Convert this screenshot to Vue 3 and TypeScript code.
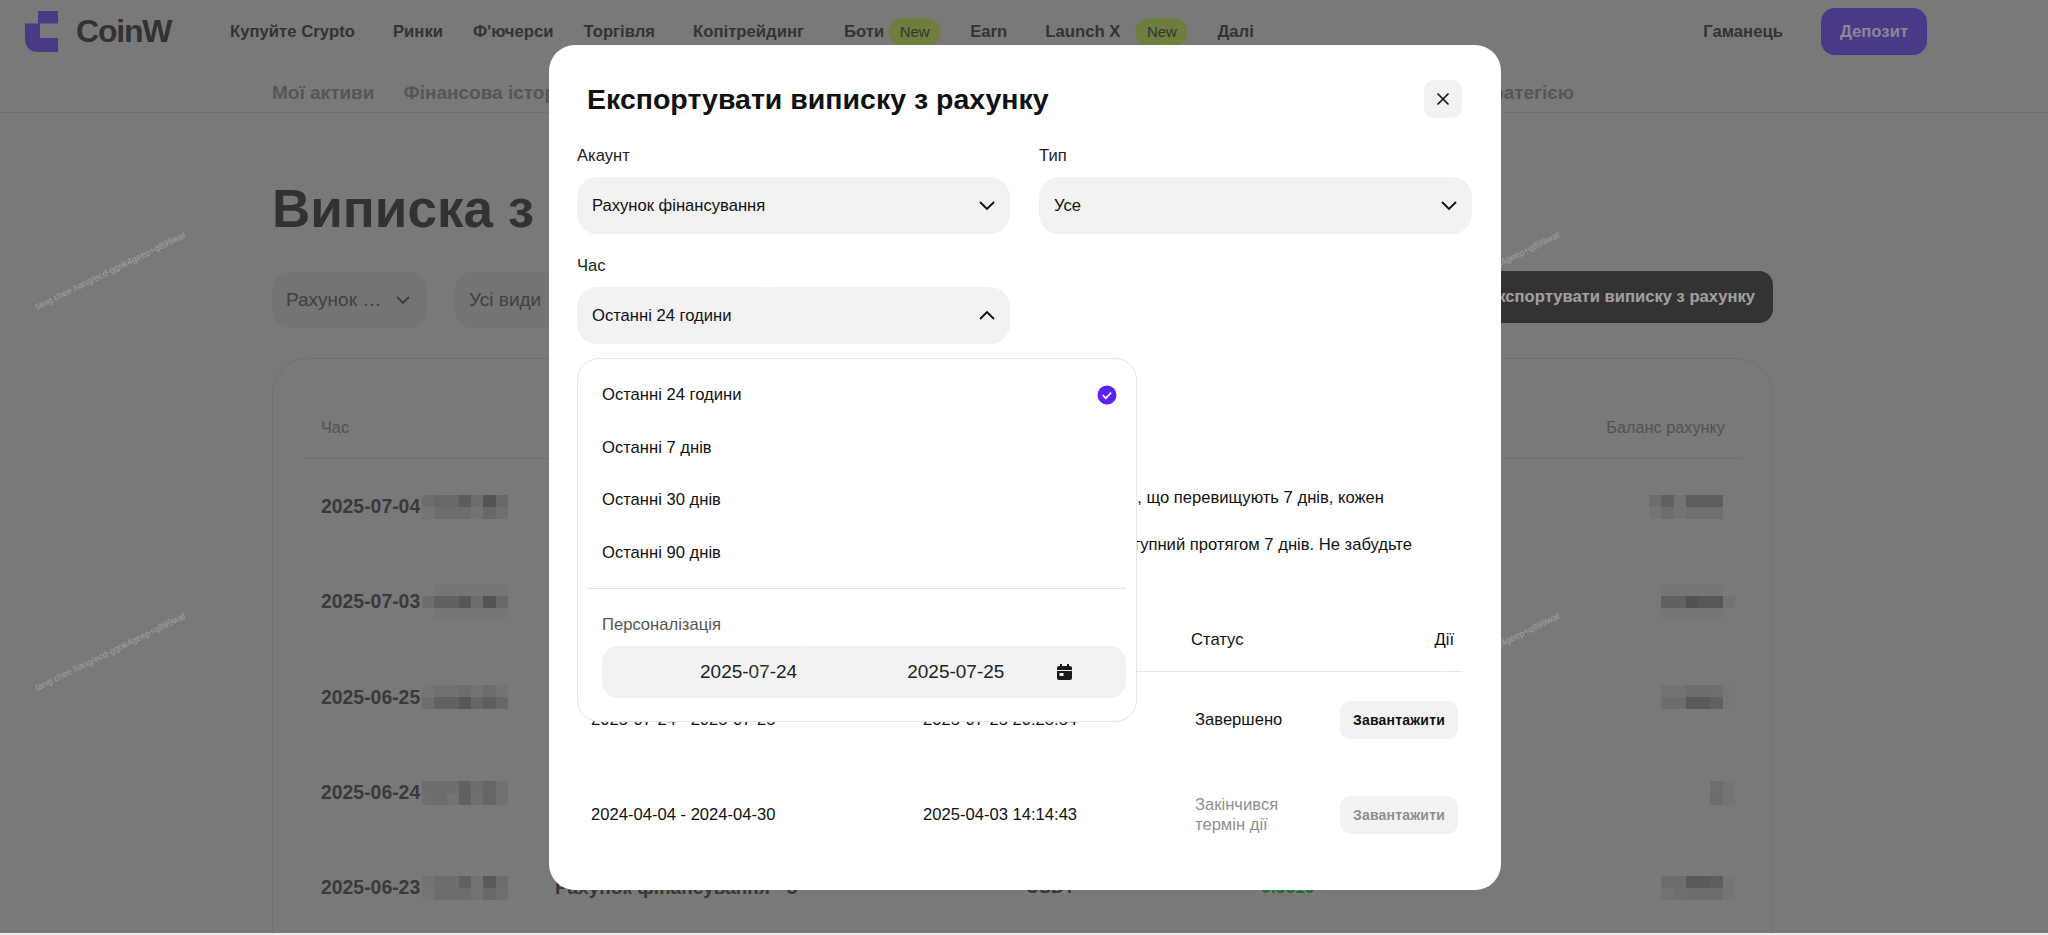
<script setup lang="ts">
// Сторінка виписки з відкритим модальним вікном експорту
type PageRow = { date: string; left: number[][]; right: number[][] }

// затемнені «мозаїки» на місці прихованих даних
const pageRows: PageRow[] = [
  {
    date: '2025-07-04',
    left: [[.1, .14, .14, .24, .1, .3, .14], [.03, .1, .1, .1, .05, .14, .08]],
    right: [[.1, .2, .05, .22, .22, .22, 0], [.04, .1, .05, .08, .08, .08, 0]],
  },
  {
    date: '2025-07-03',
    left: [[0, .02, .02, .02, .02, .02, .02], [.1, .2, .2, .28, .1, .3, .14], [0, .02, .02, .02, .02, .02, .02]],
    right: [[0, .02, .02, .02, .02, .02, 0], [0, .2, .2, .32, .28, .28, .05], [0, .02, .02, .02, .02, .02, 0]],
  },
  {
    date: '2025-06-25',
    left: [[.03, .06, .06, .1, .05, .1, .04], [.1, .2, .2, .28, .16, .22, .14]],
    right: [[0, .05, .05, .1, .1, .08, .01], [0, .1, .1, .25, .25, .2, .01]],
  },
  {
    date: '2025-06-24',
    left: [[.1, .1, .1, .2, .1, .16, .06], [.08, .1, .05, .2, .08, .16, .06]],
    right: [[0, 0, 0, 0, 0, .08, .04], [0, 0, 0, 0, 0, .1, .04]],
  },
  {
    date: '2025-06-23',
    left: [[.05, .1, .1, .2, .05, .25, .1], [.03, .1, .1, .1, .05, .14, .08]],
    right: [[0, .1, .1, .25, .25, .22, .03], [0, .05, .08, .1, .1, .1, .03]],
  },
]

const periods = ['Останні 24 години', 'Останні 7 днів', 'Останні 30 днів', 'Останні 90 днів']

const watermarks = [
  { left: 36, top: 301 },
  { left: 723, top: 301 },
  { left: 1410, top: 301 },
  { left: 36, top: 682 },
  { left: 723, top: 682 },
  { left: 1410, top: 682 },
]

function tone(a: number) {
  return { background: `rgba(0, 0, 0, ${a})` }
}
</script>

<template>
  <div class="page">
    <div class="canvas">
      <header class="nav">
        <div class="logo">
          <svg width="33" height="41" viewBox="0 0 33 41">
            <path d="M13 0H33V12.500H15V27H33V41H14Q0 41 0 27V12.500H13Z" fill="#6b53c1" />
          </svg>
          <span class="logo-text">CoinW</span>
        </div>
        <a class="link">Купуйте Crypto</a>
        <a class="link tight">Ринки</a>
        <a class="link tight">Ф'ючерси</a>
        <a class="link">Торгівля</a>
        <a class="link roomy">Копітрейдинг</a>
        <a class="link before-new">Боти</a>
        <span class="new">New</span>
        <a class="link">Earn</a>
        <a class="link before-new wide">Launch X</a>
        <span class="new">New</span>
        <a class="link">Далі</a>
        <div class="nav-right">
          <a class="link wallet">Гаманець</a>
          <button class="deposit">Депозит</button>
        </div>
      </header>

      <nav class="tabs">
        <span class="tab">Мої активи</span>
        <span class="tab">Фінансова історія</span>
        <span class="tab tab-end">Поділитися стратегією</span>
      </nav>

      <main class="content">
        <h1 class="title">Виписка з рахунку</h1>
        <div class="filters">
          <div class="filter f1">
            <span>Рахунок …</span>
            <svg width="16" height="10" viewBox="0 0 16 10"><path d="M2 2l6 6 6-6" fill="none" stroke="#555" stroke-width="1.8" /></svg>
          </div>
          <div class="filter f2"><span>Усі види</span></div>
          <button class="export">Експортувати виписку з рахунку</button>
        </div>

        <section class="card">
          <div class="card-head">
            <span>Час</span>
            <span>Баланс рахунку</span>
          </div>
          <div v-for="r in pageRows" :key="r.date" class="page-row">
            <b class="date">{{ r.date }}</b>
            <div class="mosaic">
              <div v-for="(line, i) in r.left" :key="i" class="mosaic-line">
                <i v-for="(a, j) in line" :key="j" :style="tone(a)"></i>
              </div>
            </div>
            <b class="acc">Рахунок фінансування - 3</b>
            <b class="cur">USDT</b>
            <b class="amount">0.5610</b>
            <div class="mosaic small">
              <div v-for="(line, i) in r.right" :key="i" class="mosaic-line">
                <i v-for="(a, j) in line" :key="j" :style="tone(a)"></i>
              </div>
            </div>
          </div>
        </section>
      </main>

      <div class="mask"></div>
    </div>

    <div class="modal">
      <div class="modal-head">
        <h2>Експортувати виписку з рахунку</h2>
        <button class="close" aria-label="Закрити">
          <svg width="14" height="14" viewBox="0 0 14 14"><path d="M1.500 1.500l11 11M12.500 1.500l-11 11" stroke="#111" stroke-width="1.6" /></svg>
        </button>
      </div>

      <div class="fields">
        <label class="field">
          <span class="label">Акаунт</span>
          <div class="select">
            <span>Рахунок фінансування</span>
            <svg width="18" height="11" viewBox="0 0 18 11"><path d="M2 2l7 7 7-7" fill="none" stroke="#111" stroke-width="1.9" /></svg>
          </div>
        </label>
        <label class="field">
          <span class="label">Тип</span>
          <div class="select">
            <span>Усе</span>
            <svg width="18" height="11" viewBox="0 0 18 11"><path d="M2 2l7 7 7-7" fill="none" stroke="#111" stroke-width="1.9" /></svg>
          </div>
        </label>
        <label class="field">
          <span class="label">Час</span>
          <div class="select">
            <span>Останні 24 години</span>
            <svg width="18" height="11" viewBox="0 0 18 11"><path d="M2 9l7-7 7 7" fill="none" stroke="#111" stroke-width="1.9" /></svg>
          </div>
        </label>
      </div>

      <div class="notice">
        <p class="line-one">Для даних, що перевищують 7 днів, кожен</p>
        <p>файл буде доступний протягом 7 днів. Не забудьте</p>
      </div>

      <div class="table">
        <div class="t-head">
          <span class="c1">Час</span>
          <span class="c2">Створено</span>
          <span class="c3 status-head">Статус</span>
          <span class="c4">Дії</span>
        </div>
        <div class="t-row">
          <span class="c1">2025-07-24 - 2025-07-25</span>
          <span class="c2">2025-07-25 20:28:54</span>
          <span class="c3">Завершено</span>
          <span class="c4"><button class="dl">Завантажити</button></span>
        </div>
        <div class="t-row">
          <span class="c1">2024-04-04 - 2024-04-30</span>
          <span class="c2">2025-04-03 14:14:43</span>
          <span class="c3 off">Закінчився<br />термін дії</span>
          <span class="c4"><button class="dl dl-off">Завантажити</button></span>
        </div>
      </div>

      <!-- випадаючий список перекриває текст і таблицю -->
      <div class="dropdown">
        <div v-for="(p, i) in periods" :key="p" class="option">
          <span>{{ p }}</span>
          <svg v-if="i === 0" width="20" height="20" viewBox="0 0 20 20">
            <circle cx="10" cy="10" r="9.500" fill="#5a23f5" />
            <path d="M5.800 10.200l3 3 5.400-5.600" fill="none" stroke="#fff" stroke-width="1.700" />
          </svg>
        </div>
        <div class="divider"></div>
        <div class="custom-label">Персоналізація</div>
        <div class="range">
          <span class="d1">2025-07-24</span>
          <span class="d2">2025-07-25</span>
          <svg width="15" height="16" viewBox="0 0 15 16">
            <path d="M3 0h2v2h5V0h2v2h1a2 2 0 0 1 2 2v2H0V4a2 2 0 0 1 2-2h1z" fill="#1a1a1a" />
            <path d="M0 7h15v7a2 2 0 0 1-2 2H2a2 2 0 0 1-2-2zm2.500 2v3h4V9z" fill="#1a1a1a" fill-rule="evenodd" />
          </svg>
        </div>
      </div>
    </div>

    <div class="marks">
      <span v-for="(m, i) in watermarks" :key="i" class="mark" :style="{ left: m.left + 'px', top: m.top + 'px' }">tang.chee.hang/ecd-ggnk4geep+q899wal</span>
    </div>
  </div>
</template>

<style>
html, body { margin: 0; background: #eee; overflow: hidden; }
</style>

<style scoped>
.page {
  position: relative;
  width: 2048px;
  height: 935px;
  overflow: hidden;
  background: #ececec;
  font-family: "Liberation Sans", Arial, sans-serif;
  color: #111;
}
/* кольори під маскою підібрані так, щоб після затемнення збігатися зі скріншотом */
.canvas {
  position: relative;
  height: 933px;
  overflow: hidden;
  background: #aeaeae;
}

/* верхнє меню */
.nav {
  display: flex;
  align-items: center;
  height: 63px;
  padding-left: 25px;
}
.logo { display: flex; align-items: center; gap: 18px; width: 205px; flex: none; }
.logo-text { font-size: 32px; font-weight: 700; color: #484848; letter-spacing: -1.200px; }
.link { font-size: 16.700px; font-weight: 700; color: #4a4a4a; margin-right: 38px; white-space: nowrap; }
.tight { margin-right: 30px; }
.roomy { margin-right: 40px; }
.before-new { margin-right: 4px; }
.wide { margin-right: 15px; }
.new {
  display: flex;
  align-items: center;
  justify-content: center;
  width: 53px;
  height: 28px;
  margin-right: 29px;
  border-radius: 14px;
  background: #9eb55a;
  font-size: 15px;
  color: #4a4a4a;
}
.nav-right { margin-left: auto; padding-right: 121px; display: flex; align-items: center; }
.wallet { margin-right: 38px; }
.deposit {
  width: 106px;
  height: 47px;
  border: 0;
  border-radius: 14px;
  background: #6b53c1;
  color: #c8c1dd;
  font: 700 16.700px "Liberation Sans", Arial, sans-serif;
}

.tabs {
  display: flex;
  gap: 29px;
  height: 50px;
  padding: 19px 0 0 272px;
  box-sizing: border-box;
  border-bottom: 1px solid #a0a0a0;
}
.tab { font-size: 19px; font-weight: 700; color: #7c7c7c; }
.tab-end { margin-left: auto; margin-right: 474px; }

.content { padding: 0 275px 0 272px; }
.title { margin: 64px 0 0; font-size: 53px; line-height: 64px; font-weight: 700; color: #484848; white-space: nowrap; }
.filters { display: flex; align-items: flex-start; margin-top: 31px; gap: 28px; }
.filter {
  display: flex;
  align-items: center;
  justify-content: space-between;
  height: 56px;
  padding: 0 16px 0 14px;
  box-sizing: border-box;
  border-radius: 18px;
  background: #a7a7a7;
  font-size: 19px;
  color: #5c5c5c;
}
.f1 { width: 155px; }
.f2 { width: 200px; }
.export {
  margin-left: auto;
  margin-top: -1px;
  height: 52px;
  width: 420px;
  border: 0;
  border-radius: 14px;
  background: #4a4a4a;
  color: #e5e5e5;
  font: 700 16.600px "Liberation Sans", Arial, sans-serif;
  padding: 0 18px 0 0;
  text-align: right;
}
.card {
  margin-top: 30px;
  height: 700px;
  padding: 0 29px;
  box-sizing: border-box;
  border: 1px solid #a0a0a0;
  border-radius: 36px;
}
.card-head {
  display: flex;
  justify-content: space-between;
  align-items: center;
  height: 100px;
  padding: 38px 18px 0 19px;
  box-sizing: border-box;
  border-bottom: 1px solid #a0a0a0;
  font-size: 16.300px;
  color: #767676;
}
.page-row { display: flex; align-items: center; height: 95.300px; padding-left: 19px; }
.date { width: 101px; flex: none; font-size: 19.400px; color: #535353; }
.mosaic { width: 86px; flex: none; }
.mosaic-line { display: flex; height: 12px; }
.mosaic-line i { display: block; width: 12.300px; height: 12px; }
.acc { width: 471px; flex: none; margin-left: 47px; font-size: 19px; color: #4f4f4f; white-space: nowrap; }
.cur { width: 235px; flex: none; font-size: 18px; color: #4f4f4f; }
.amount { font-size: 17.500px; color: #2a9a45; }
.small { margin-left: auto; margin-right: 8px; }

.mask { position: absolute; inset: 0; background: rgba(0, 0, 0, .3); }

/* модальне вікно */
.modal {
  position: absolute;
  left: 549px;
  top: 45px;
  width: 952px;
  height: 845px;
  box-sizing: border-box;
  padding: 0 29px 0 28px;
  background: #fff;
  border-radius: 26px;
}
.modal-head {
  display: flex;
  align-items: center;
  justify-content: space-between;
  height: 98px;
  padding: 10px 10px 0 10px;
  box-sizing: border-box;
}
h2 { margin: 0; font-size: 28.500px; font-weight: 700; }
.close {
  display: flex;
  align-items: center;
  justify-content: center;
  width: 38px;
  height: 38px;
  padding: 0;
  border: 0;
  border-radius: 10px;
  background: #f2f2f2;
}
.fields { display: grid; grid-template-columns: 433px 433px; column-gap: 29px; row-gap: 19px; }
.field { display: block; }
.label { display: block; height: 34px; line-height: 26px; font-size: 16.600px; color: #222; }
.select {
  display: flex;
  align-items: center;
  justify-content: space-between;
  height: 57px;
  padding: 0 14px 0 15px;
  box-sizing: border-box;
  border-radius: 20px;
  background: #f2f2f2;
  font-size: 16.600px;
}

.notice { padding-top: 130px; text-align: right; font-size: 16.600px; padding-right: 60px; }
.notice p { margin: 0; height: 47px; line-height: 47px; white-space: nowrap; }
.notice .line-one { padding-right: 28px; }

.table { margin-top: 41px; font-size: 16.600px; margin-right: 10px; }
.t-head, .t-row { display: flex; align-items: center; }
.t-head { height: 62px; border-bottom: 1px solid #e8e8e8; }
.t-row { height: 95px; }
.c1 { width: 346px; padding-left: 14px; box-sizing: border-box; flex: none; }
.c2 { width: 272px; flex: none; }
.c3 { width: 144px; flex: none; line-height: 20px; }
.c4 { margin-left: auto; text-align: right; }
.status-head { margin-left: -4px; margin-right: 4px; }
.t-head .c4 { padding-right: 8px; }
.off { color: #8f8f8f; }
.dl {
  display: block;
  width: 118px;
  height: 38px;
  margin-right: 4px;
  border: 0;
  border-radius: 10px;
  background: #f2f2f2;
  color: #111;
  font: 700 14px "Liberation Sans", Arial, sans-serif;
  letter-spacing: .2px;
}
.dl-off { color: #8f8f8f; }

.dropdown {
  position: absolute;
  left: 28px;
  top: 313px;
  width: 560px;
  height: 364px;
  box-sizing: border-box;
  padding: 10px 10px 0 24px;
  background: #fff;
  border: 1px solid #e6e6e6;
  border-radius: 22px;
}
.option {
  display: flex;
  align-items: center;
  justify-content: space-between;
  height: 52.500px;
  padding-right: 9px;
  font-size: 16.600px;
}
.divider { height: 1px; margin: 9px 0 0 -15px; background: #e3e3e3; }
.custom-label { margin-top: 26px; font-size: 16.600px; line-height: 20px; color: #555; }
.range {
  display: flex;
  align-items: center;
  height: 52px;
  margin-top: 11px;
  border-radius: 16px;
  background: #f2f2f2;
  font-size: 19px;
  color: #222;
}
.d1 { margin-left: 98px; }
.d2 { margin-left: 110px; margin-right: 53px; }

.marks { position: absolute; inset: 0; pointer-events: none; }
.mark {
  position: absolute;
  font-size: 9px;
  line-height: 12px;
  white-space: nowrap;
  color: rgba(255, 255, 255, .3);
  transform: rotate(-26deg);
  transform-origin: left center;
}
</style>
